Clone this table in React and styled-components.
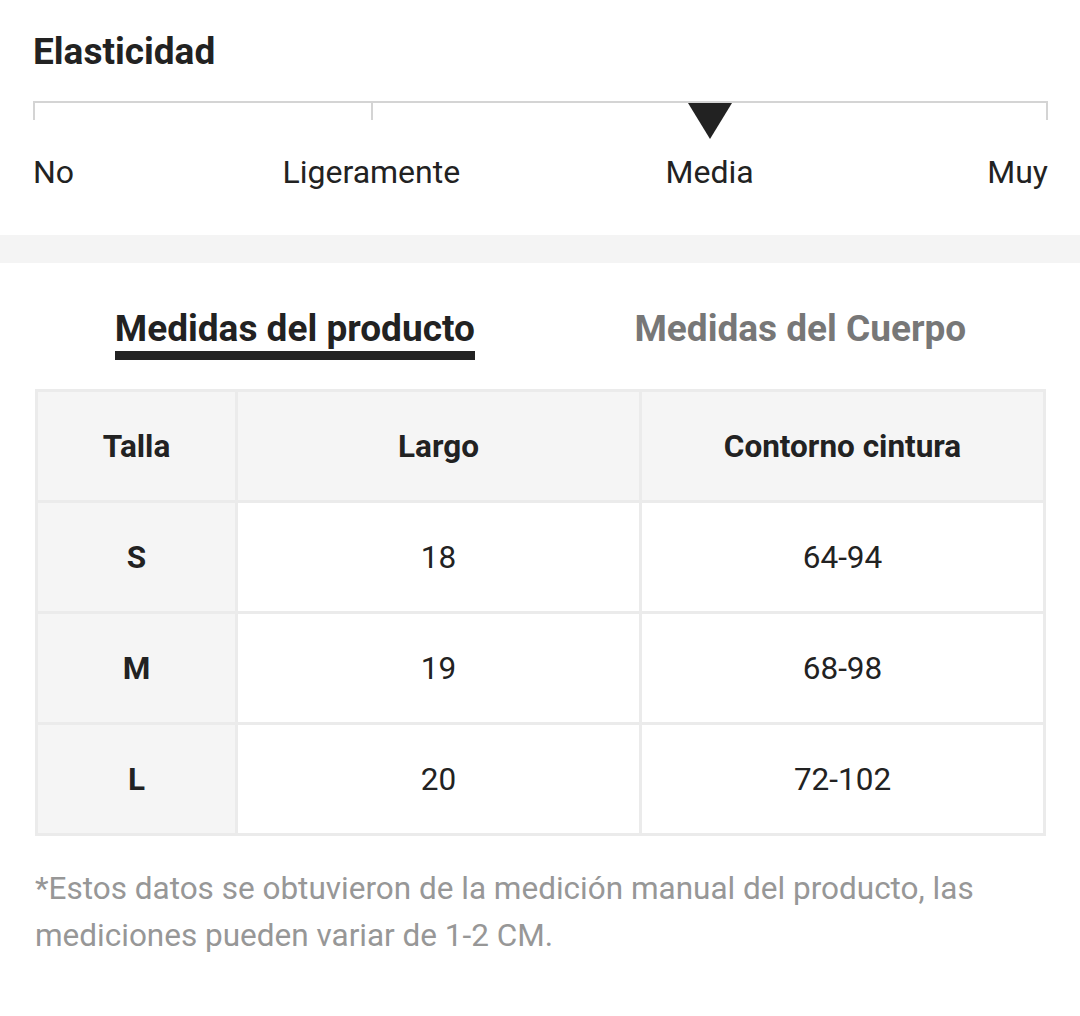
import React from 'react'
import styled, { createGlobalStyle } from 'styled-components'

const GlobalStyle = createGlobalStyle`
  html, body {
    margin: 0;
    padding: 0;
    background: #ffffff;
  }
  body {
    font-family: Roboto, 'Noto Sans', 'Liberation Sans', sans-serif;
    color: #222222;
  }
`

const Page = styled.div`
  width: 1080px;
  min-height: 1016px;
  background: #ffffff;
`

const ElasticSection = styled.section`
  padding: 33px 32px 0 33px;
  height: 235px;
  box-sizing: border-box;
`

const Title = styled.h2`
  margin: 0;
  font-size: 37px;
  line-height: 37px;
  font-weight: 700;
  color: #222222;
`

const Scale = styled.div`
  position: relative;
  margin-top: 31px;
  border-top: 2px solid #d4d4d4;
  display: flex;
  justify-content: space-between;
`

const Tick = styled.span`
  width: 2px;
  height: 17px;
  background: #d4d4d4;
`

const Marker = styled.span`
  position: absolute;
  top: 0;
  left: calc(66.666% - 22px);
  width: 0;
  height: 0;
  border-left: 22px solid transparent;
  border-right: 22px solid transparent;
  border-top: 36px solid #222222;
`

const Labels = styled.div`
  display: flex;
  justify-content: space-between;
  margin-top: 34px;
`

const Label = styled.span`
  width: 0;
  display: flex;
  justify-content: ${p => p.align || 'center'};
  white-space: nowrap;
  font-size: 32px;
  line-height: 36px;
  color: #222222;
`

const Band = styled.div`
  height: 28px;
  background: #f4f4f4;
`

const Tabs = styled.div`
  display: flex;
  justify-content: space-around;
  padding: 47px 34px 0 35px;
`

const Tab = styled.div`
  font-size: 37px;
  line-height: 37px;
  font-weight: 700;
  color: ${p => (p.active ? '#222222' : '#777777')};
  padding-bottom: 4px;
  border-bottom: 9px solid ${p => (p.active ? '#222222' : 'transparent')};
  white-space: nowrap;
`

const TableWrap = styled.div`
  padding: 29px 34px 0 35px;
`

const Table = styled.table`
  width: 100%;
  border-collapse: collapse;
  table-layout: fixed;
  border: 2px solid #ebebeb;
`

const Cell = styled.td`
  height: 108px;
  padding: 0;
  border: 3px solid #ebebeb;
  text-align: center;
  vertical-align: middle;
  font-size: 31.5px;
  font-weight: ${p => (p.bold ? 700 : 400)};
  background: ${p => (p.shade ? '#f5f5f5' : '#ffffff')};
  color: #222222;
`

const Note = styled.p`
  margin: 29px 40px 0 35px;
  font-size: 31.5px;
  line-height: 47px;
  color: #979797;
`

const rows = [
  ['S', '18', '64-94'],
  ['M', '19', '68-98'],
  ['L', '20', '72-102'],
]

export default function App() {
  return (
    <Page>
      <GlobalStyle />
      <ElasticSection>
        <Title>Elasticidad</Title>
        <Scale>
          <Tick />
          <Tick />
          <Tick />
          <Tick />
          <Marker />
        </Scale>
        <Labels>
          <Label align="flex-start">No</Label>
          <Label>Ligeramente</Label>
          <Label>Media</Label>
          <Label align="flex-end">Muy</Label>
        </Labels>
      </ElasticSection>
      <Band />
      <Tabs>
        <Tab active>Medidas del producto</Tab>
        <Tab>Medidas del Cuerpo</Tab>
      </Tabs>
      <TableWrap>
        <Table>
          <colgroup>
            <col style={{ width: '200px' }} />
            <col />
            <col />
          </colgroup>
          <thead>
            <tr>
              <Cell as="th" bold shade>Talla</Cell>
              <Cell as="th" bold shade>Largo</Cell>
              <Cell as="th" bold shade>Contorno cintura</Cell>
            </tr>
          </thead>
          <tbody>
            {rows.map(r => (
              <tr key={r[0]}>
                <Cell bold shade>{r[0]}</Cell>
                <Cell>{r[1]}</Cell>
                <Cell>{r[2]}</Cell>
              </tr>
            ))}
          </tbody>
        </Table>
      </TableWrap>
      <Note>
        *Estos datos se obtuvieron de la medición manual del producto, las
        mediciones pueden variar de 1-2 CM.
      </Note>
    </Page>
  )
}
